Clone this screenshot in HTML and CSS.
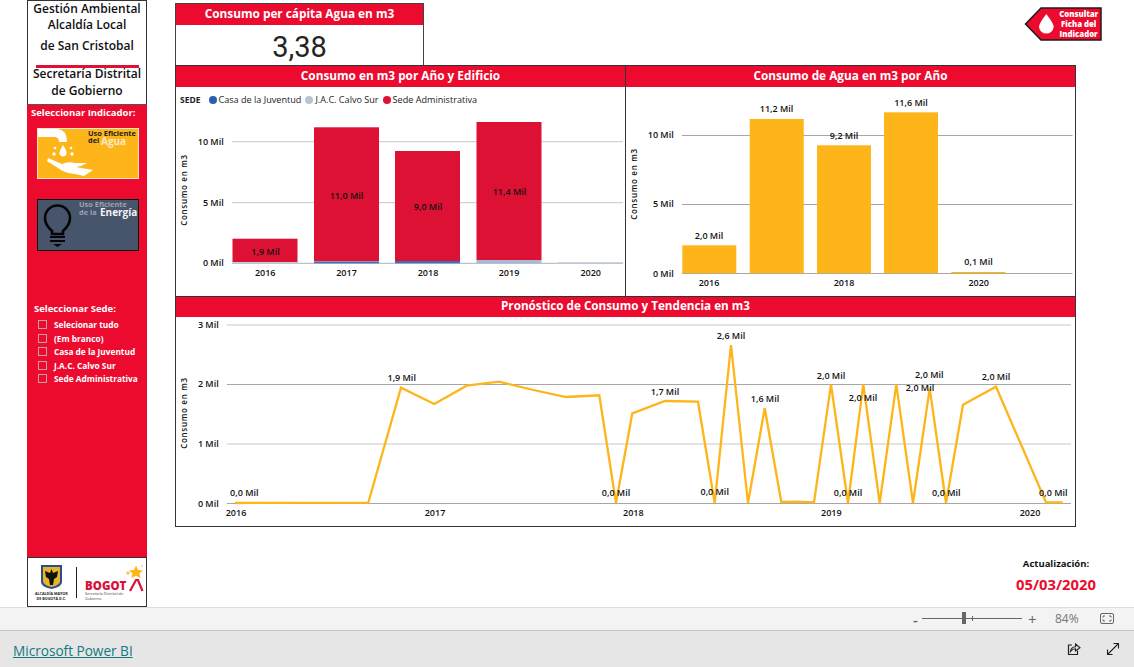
FILE: index.html
```html
<!DOCTYPE html>
<html lang="es">
<head>
  <meta charset="UTF-8">
  <meta name="viewport" content="width=device-width, initial-scale=1.0">
  <title>Gestión Ambiental - Consumo de Agua</title>
  <link rel="stylesheet" href="styles.css">
</head>
<body>
  <div class="report">
    <aside class="sidebar">
      <div class="brand">
        <div class="brand-line">Gestión Ambiental</div>
        <div class="brand-line">Alcaldía Local</div>
        <div class="brand-line brand-gap">de San Cristobal</div>
        <div class="brand-rule"></div>
        <div class="brand-line">Secretaría Distrital</div>
        <div class="brand-line brand-last">de Gobierno</div>
      </div>

      <div class="side-body">
        <div class="side-title">Seleccionar Indicador:</div>

        <svg class="tile tile-water" viewBox="0 0 102 51" width="102" height="51">
          <rect x="0.5" y="0.5" width="101" height="50" fill="#fdb51a" stroke="#fde3c8"/>
          <path d="M1 1H21Q30 2 30 14H22Q22 9 17 9H1Z" fill="#fff"/>
          <path d="M26 17Q30 23 29.5 25A3.4 3.4 0 0 1 22.5 25Q22.5 23 26 17Z" fill="#fff"/>
          <circle cx="18" cy="20" r="1.3" fill="#fff"/>
          <circle cx="34" cy="20" r="1.3" fill="#fff"/>
          <circle cx="17" cy="26" r="1.7" fill="#fff"/>
          <circle cx="35" cy="26" r="1.7" fill="#fff"/>
          <path d="M11 30L25 36Q31 33 38 35L50 35Q45 38 39 39L50 41L56 42L47 48L38 46Q27 45 21 40L10 33Z" fill="#fff"/>
          <text class="tile-text tile-dark" x="51" y="7.5">Uso Eficiente</text>
          <text class="tile-text tile-dark" x="51" y="15">del</text>
          <text class="tile-big tile-pale" x="64" y="16.5">Agua</text>
        </svg>

        <svg class="tile tile-energy" viewBox="0 0 102 52" width="102" height="52">
          <rect x="0.5" y="0.5" width="101" height="51" fill="#46556b" stroke="#0a0a0a"/>
          <path d="M15 32Q8 26 8 19A12.5 12.5 0 0 1 33 19Q33 26 26 32V35H15Z" fill="none" stroke="#050505" stroke-width="2.6"/>
          <path d="M13 38H28M13 42H28" stroke="#050505" stroke-width="2"/>
          <path d="M16 45H25L20.5 48Z" fill="#050505"/>
          <text class="tile-text tile-grey" x="42" y="8">Uso Eficiente</text>
          <text class="tile-text tile-grey" x="42" y="15.5">de la</text>
          <text class="tile-big tile-white" x="63" y="16.5">Energía</text>
        </svg>

        <div class="side-title side-title-sede">Seleccionar Sede:</div>
        <ul class="slicer">
          <li class="slicer-item"><span class="check"></span>Selecionar tudo</li>
          <li class="slicer-item"><span class="check"></span>(Em branco)</li>
          <li class="slicer-item"><span class="check"></span>Casa de la Juventud</li>
          <li class="slicer-item"><span class="check"></span>J.A.C. Calvo Sur</li>
          <li class="slicer-item"><span class="check"></span>Sede Administrativa</li>
        </ul>
      </div>

      <div class="logos">
        <svg viewBox="27 558 118 48" width="118" height="48">
          <path d="M40 565H61V582Q61 587 50.5 589Q40 587 40 582Z" fill="#2f4a8f"/>
          <path d="M42 567H59V581Q59 585 50.5 587Q42 585 42 581Z" fill="#e2b52a"/>
          <path d="M50.5 569L52 573L57 571L56 577L53 579L52 585H49L48 579L45 577L44 571L49 573Z" fill="#111"/>
          <text class="logo-tiny logo-bold" x="50.3" y="594.5">ALCALDÍA MAYOR</text>
          <text class="logo-tiny logo-bold" x="50.3" y="599.5">DE BOGOTÁ D.C.</text>
          <path d="M75.5 567V598" stroke="#222" stroke-width="1"/>
          <text class="logo-bogota" x="84" y="590">BOGOT</text>
          <path d="M129 591L135 580H137L141.5 591" fill="none" stroke="#d8123a" stroke-width="2.2"/>
          <path d="M135 565.5L137 570L142 570.5L138.5 573.5L139.5 578L135 575.8L130.5 578L131.5 573.5L128 570.5L133 570Z" fill="#fdb51a"/>
          <path d="M125 573H129M127 571V575M140 566H142" stroke="#fdb51a" stroke-width="1"/>
          <text class="logo-small" x="84" y="595">Secretaría Distrital de</text>
          <text class="logo-small" x="84" y="599.5">Gobierno</text>
        </svg>
      </div>
    </aside>

    <main class="main">
      <div class="top-row">
        <section class="kpi">
          <h2 class="panel-title kpi-title">Consumo per cápita Agua en m3</h2>
          <div class="kpi-value">3,38</div>
        </section>

        <svg class="pin" viewBox="1024 7 78 34" width="78" height="34">
          <path d="M1025.5 24L1041 8H1101V40H1041Z" fill="#ec0b2e" stroke="#1c1c1c" stroke-width="1.5"/>
          <path d="M1046.3 14Q1054 24 1053.7 27A7.4 7.4 0 0 1 1039 27Q1038.7 24 1046.3 14Z" fill="#fff"/>
          <text class="pin-text" x="1078.7" y="17">Consultar</text>
          <text class="pin-text" x="1078.7" y="27">Ficha del</text>
          <text class="pin-text" x="1078.7" y="37">Indicador</text>
        </svg>
      </div>

      <div class="chart-row">
        <section class="panel panel-left">
          <h2 class="panel-title">Consumo en m3 por Año y Edificio</h2>
          <div class="legend">
            <span class="legend-name">SEDE</span>
            <span class="legend-item"><i class="dot dot-blue"></i>Casa de la Juventud</span>
            <span class="legend-item"><i class="dot dot-grey"></i>J.A.C. Calvo Sur</span>
            <span class="legend-item"><i class="dot dot-red"></i>Sede Administrativa</span>
          </div>
          <svg class="chart" viewBox="176 112 449 184" width="449" height="184">
            <path class="grid" d="M232 141.7H623M232 202.7H623"/>
            <path class="grid-base" d="M232 263.3H623"/>
            <rect class="bar-red" x="232.5" y="238.7" width="65" height="23.5"/>
            <rect class="bar-grey" x="232.5" y="262" width="65" height="1.3"/>
            <rect class="bar-red" x="314" y="127.3" width="65" height="134"/>
            <rect class="bar-blue" x="314" y="261.5" width="65" height="1.8"/>
            <rect class="bar-red" x="395" y="151" width="65" height="110"/>
            <rect class="bar-blue" x="395" y="261" width="65" height="2.3"/>
            <rect class="bar-red" x="476.5" y="122" width="65" height="138"/>
            <rect class="bar-pale" x="476.5" y="260" width="65" height="3.3"/>
            <rect class="bar-grey" x="557.7" y="262.3" width="65" height="1"/>
            <text class="label mid" x="265.5" y="255">1,9 Mil</text>
            <text class="label mid" x="346.5" y="199">11,0 Mil</text>
            <text class="label mid" x="428" y="210">9,0 Mil</text>
            <text class="label mid" x="509.5" y="195">11,4 Mil</text>
            <text class="label end" x="223.7" y="145">10 Mil</text>
            <text class="label end" x="223.7" y="206">5 Mil</text>
            <text class="label end" x="223.7" y="265.5">0 Mil</text>
            <text class="label mid" x="265.2" y="276">2016</text>
            <text class="label mid" x="346.5" y="276">2017</text>
            <text class="label mid" x="428" y="276">2018</text>
            <text class="label mid" x="509" y="276">2019</text>
            <text class="label mid" x="590.7" y="276">2020</text>
            <text class="axis-title" transform="rotate(-90 187 190)" x="187" y="190">Consumo en m3</text>
          </svg>
        </section>

        <section class="panel">
          <h2 class="panel-title">Consumo de Agua en m3 por Año</h2>
          <svg class="chart" viewBox="626 87 449 209" width="449" height="209">
            <path class="grid-dark" d="M682 135.5H1072.5M682 204.5H1072.5M682 273.5H1072.5"/>
            <rect class="bar-gold" x="682.3" y="245.3" width="54" height="28"/>
            <rect class="bar-gold" x="749.7" y="119" width="54" height="154.3"/>
            <rect class="bar-gold" x="817" y="145.3" width="54" height="128"/>
            <rect class="bar-gold" x="884" y="112.3" width="54" height="161"/>
            <rect class="bar-gold" x="951.3" y="272" width="54" height="1.3"/>
            <text class="label mid" x="709" y="239">2,0 Mil</text>
            <text class="label mid" x="776.6" y="111.7">11,2 Mil</text>
            <text class="label mid" x="844" y="138.7">9,2 Mil</text>
            <text class="label mid" x="911" y="105.7">11,6 Mil</text>
            <text class="label mid" x="978.5" y="265">0,1 Mil</text>
            <text class="label end" x="673.7" y="138">10 Mil</text>
            <text class="label end" x="673.7" y="207">5 Mil</text>
            <text class="label end" x="673.7" y="277">0 Mil</text>
            <text class="label mid" x="709" y="286">2016</text>
            <text class="label mid" x="844" y="286">2018</text>
            <text class="label mid" x="978.7" y="286">2020</text>
            <text class="axis-title" transform="rotate(-90 637 184)" x="637" y="184">Consumo en m3</text>
          </svg>
        </section>
      </div>

      <section class="panel panel-wide">
        <h2 class="panel-title">Pronóstico de Consumo y Tendencia en m3</h2>
        <svg class="chart" viewBox="176 317 899 209" width="899" height="209">
          <path class="grid" d="M227 325H1071M227 444H1071"/>
          <path class="grid-dark" d="M227 384.5H1071M227 503.5H1071"/>
          <polyline class="line" points="235,503 368.3,502.7 401,387.7 434.3,404 466.7,385.7 499,381.7 533.3,390 566.3,397 599.3,395.3 616,503 632.3,413.3 665,401 698,401.7 714.7,503 731,345 748,503 764.7,408.3 781.3,502 797.7,501.7 814,502.3 831,384.3 848,503 863.3,384.3 879.7,503 896.3,384.3 913,503 929.7,388.3 946,503 963,404.7 996,386.7 1046,502.3 1062.7,502.3"/>
          <text class="label mid" x="244.3" y="496">0,0 Mil</text>
          <text class="label mid" x="401.7" y="380.7">1,9 Mil</text>
          <text class="label mid" x="616" y="496">0,0 Mil</text>
          <text class="label mid" x="665" y="395">1,7 Mil</text>
          <text class="label mid" x="714.7" y="495">0,0 Mil</text>
          <text class="label mid" x="731" y="338.7">2,6 Mil</text>
          <text class="label mid" x="765" y="402">1,6 Mil</text>
          <text class="label mid" x="831" y="379">2,0 Mil</text>
          <text class="label mid" x="848" y="496">0,0 Mil</text>
          <text class="label mid" x="863" y="401">2,0 Mil</text>
          <text class="label mid" x="920" y="390.7">2,0 Mil</text>
          <text class="label mid" x="929.3" y="378">2,0 Mil</text>
          <text class="label mid" x="946.3" y="496">0,0 Mil</text>
          <text class="label mid" x="996" y="380">2,0 Mil</text>
          <text class="label mid" x="1053.3" y="496">0,0 Mil</text>
          <text class="label end" x="218.7" y="328">3 Mil</text>
          <text class="label end" x="218.7" y="387">2 Mil</text>
          <text class="label end" x="218.7" y="446.7">1 Mil</text>
          <text class="label end" x="218.7" y="506.7">0 Mil</text>
          <text class="label mid" x="236" y="515.7">2016</text>
          <text class="label mid" x="435" y="515.7">2017</text>
          <text class="label mid" x="633.3" y="515.7">2018</text>
          <text class="label mid" x="831.3" y="515.7">2019</text>
          <text class="label mid" x="1030" y="515.7">2020</text>
          <text class="axis-title" transform="rotate(-90 187 413)" x="187" y="413">Consumo en m3</text>
        </svg>
      </section>

      <div class="update">
        <div class="update-label">Actualización:</div>
        <div class="update-date">05/03/2020</div>
      </div>
    </main>
  </div>

  <div class="zoom-bar">
    <span class="zoom-sign">-</span>
    <div class="zoom-track"><span class="zoom-handle"></span><span class="zoom-tick"></span></div>
    <span class="zoom-sign zoom-plus">+</span>
    <span class="zoom-value">84%</span>
    <svg class="zoom-fit" viewBox="0 0 14 11" width="14" height="11">
      <rect x="0.5" y="0.5" width="13" height="10" rx="1.5" fill="none" stroke="#666"/>
      <path d="M3 4.5V3H5M9 3H11V4.5M11 6.5V8H9M5 8H3V6.5" fill="none" stroke="#666"/>
    </svg>
  </div>

  <footer class="footer">
    <a class="pbi-link" href="#">Microsoft Power BI</a>
    <div class="footer-icons">
      <svg viewBox="0 0 14 14" width="14" height="14">
        <path d="M5 3H1.5V12.5H10.5V8.5" fill="none" stroke="#222" stroke-width="1.2"/>
        <path d="M3.5 9.5Q4 5 8.5 4.7V2L13 5.8L8.5 9V6.8Q5.5 6.8 3.5 9.5Z" fill="none" stroke="#222" stroke-width="1.1"/>
      </svg>
      <svg viewBox="0 0 14 14" width="14" height="14">
        <path d="M1.5 12.5L12.5 1.5M7.5 1.5H12.5V6.5M1.5 7.5V12.5H6.5" fill="none" stroke="#222" stroke-width="1.1"/>
      </svg>
    </div>
  </footer>
</body>
</html>
```
FILE: styles.css
```css
* { box-sizing: border-box; }
html, body { margin: 0; padding: 0; }
body { width: 1134px; height: 667px; overflow: hidden; background: #fff; font-family: "Open Sans", "Noto Sans", sans-serif; color: #111; }

.report { display: flex; height: 607px; }

/* left column */
.sidebar { display: flex; flex-direction: column; width: 120px; margin-left: 27px; }
.brand { height: 105px; border: 1px solid #333; border-bottom-color: #555; background: #fff; text-align: center; font-size: 12px; font-weight: 600; line-height: 15px; }
.brand-line { height: 15.5px; white-space: nowrap; }
.brand-gap { margin-top: 6px; }
.brand-rule { width: 103px; height: 3px; margin: 11px auto -2px; background: #dd1133; }
.brand-last { margin-top: 2px; }

.side-body { flex: 1; padding-top: 1px; background: #ec0b2e; }
.side-title { padding-left: 4px; color: #fff; font-size: 9.5px; font-weight: 700; line-height: 14px; white-space: nowrap; }
.side-title-sede { margin-top: 51px; padding-left: 7px; }
.tile { display: block; margin-left: 10px; }
.tile-water { margin-top: 8px; }
.tile-energy { margin-top: 20px; }
.tile-text { font-size: 7.4px; font-weight: 700; }
.tile-big { font-size: 10px; font-weight: 700; }
.tile-dark { fill: #222; }
.tile-pale { fill: #fde9c8; }
.tile-grey { fill: #9aa3b0; }
.tile-white { fill: #f2f3f5; }

.slicer { margin: 2px 0 0; padding: 0 0 0 11px; list-style: none; }
.slicer-item { display: flex; align-items: center; gap: 7px; height: 13.5px; color: #fff; font-size: 8.3px; font-weight: 700; white-space: nowrap; }
.check { width: 9px; height: 9px; border: 1px solid #c9a0a5; }

.logos { height: 50px; border: 1px solid #333; background: #fff; }
.logos svg { display: block; }
.logo-tiny { font-size: 3.7px; text-anchor: middle; fill: #222; }
.logo-bold { font-weight: 700; }
.logo-bogota { font-size: 11.5px; font-weight: 800; fill: #d8123a; }
.logo-small { font-size: 3.8px; fill: #444; }

/* main area */
.main { flex: 1; min-width: 0; margin-left: 28px; }
.top-row { display: flex; justify-content: space-between; align-items: flex-start; height: 65px; padding: 3px 32px 0 0; }
.kpi { width: 249px; height: 62px; border: 1px solid #444; border-bottom: 0; }
.kpi-title { height: 21px; font-size: 11.6px; }
.kpi-value { font-family: Roboto, sans-serif; color: #252423; font-size: 29px; line-height: 44px; text-align: center; }
.pin { margin-top: 4px; }
.pin-text { font-size: 7.8px; font-weight: 800; fill: #fff; text-anchor: middle; }

.panel-title { height: 21px; margin: 0; background: #ec0b2e; color: #fff; font-size: 11.8px; font-weight: 700; line-height: 18px; text-align: center; white-space: nowrap; }
.chart-row { display: grid; grid-template-columns: 450px 451px; height: 232px; }
.panel { border: 1px solid #333; background: #fff; }
.panel-left { border-right: 0; }
.panel-wide { width: 901px; height: 230px; border-top: 0; }
.panel-wide .panel-title { height: 20px; font-size: 11.7px; line-height: 17px; }
.chart { display: block; }

.legend { display: flex; align-items: center; gap: 4px; height: 25px; padding-left: 4px; font-size: 9.1px; color: #222; white-space: nowrap; }
.legend-name { margin-right: 4px; font-size: 8.5px; font-weight: 700; }
.legend-item { display: flex; align-items: center; gap: 2px; }
.dot { width: 8px; height: 8px; border-radius: 50%; }
.dot-blue { background: #2a5fb0; }
.dot-grey { background: #bcc3d0; }
.dot-red { background: #dd1133; }

.grid { stroke: #c8c8c8; fill: none; }
.grid-dark { stroke: #a6a6a6; fill: none; }
.grid-base { stroke: #a8b4c4; fill: none; }
.bar-red { fill: #dd1133; }
.bar-grey { fill: #c5ccd6; }
.bar-blue { fill: #3d6cb8; }
.bar-pale { fill: #a9b9d6; }
.bar-gold { fill: #fdb51a; }
.line { fill: none; stroke: #fdb51a; stroke-width: 2.3; }
.label { font-size: 9px; font-weight: 600; fill: #111; }
.mid { text-anchor: middle; }
.end { text-anchor: end; }
.axis-title { font-size: 8px; font-weight: 600; letter-spacing: 0.7px; text-anchor: middle; fill: #111; }

.update { width: 120px; margin: 30px 0 0 821px; text-align: center; }
.update-label { color: #111; font-size: 9.5px; font-weight: 700; line-height: 14px; }
.update-date { margin-top: 4px; color: #ec0b2e; font-size: 14.8px; font-weight: 700; line-height: 18px; }

/* bottom bars */
.zoom-bar { display: flex; align-items: center; height: 24px; padding: 0 0 1px 913px; border-top: 1px solid #ddd; border-bottom: 1px solid #c8c8c8; background: #f3f3f3; color: #666; }
.zoom-sign { width: 9px; font-size: 15px; font-weight: 600; line-height: 20px; }
.zoom-plus { margin-left: 6px; font-weight: 400; }
.zoom-track { position: relative; width: 100px; height: 1px; background: #666; }
.zoom-handle { position: absolute; left: 40px; top: -6px; width: 4px; height: 12px; background: #666; }
.zoom-tick { position: absolute; left: 50px; top: -2px; width: 1px; height: 5px; background: #666; }
.zoom-value { margin-left: 18px; font-size: 12px; color: #777; }
.zoom-fit { margin-left: 21px; }

.footer { display: flex; justify-content: space-between; align-items: center; height: 36px; padding: 3px 14px 0 13px; background: #e6e6e6; }
.pbi-link { color: #117a80; font-size: 13.6px; text-decoration: underline; }
.footer-icons { display: flex; gap: 25px; margin-top: -3px; }
.footer-icons svg { display: block; }
```
